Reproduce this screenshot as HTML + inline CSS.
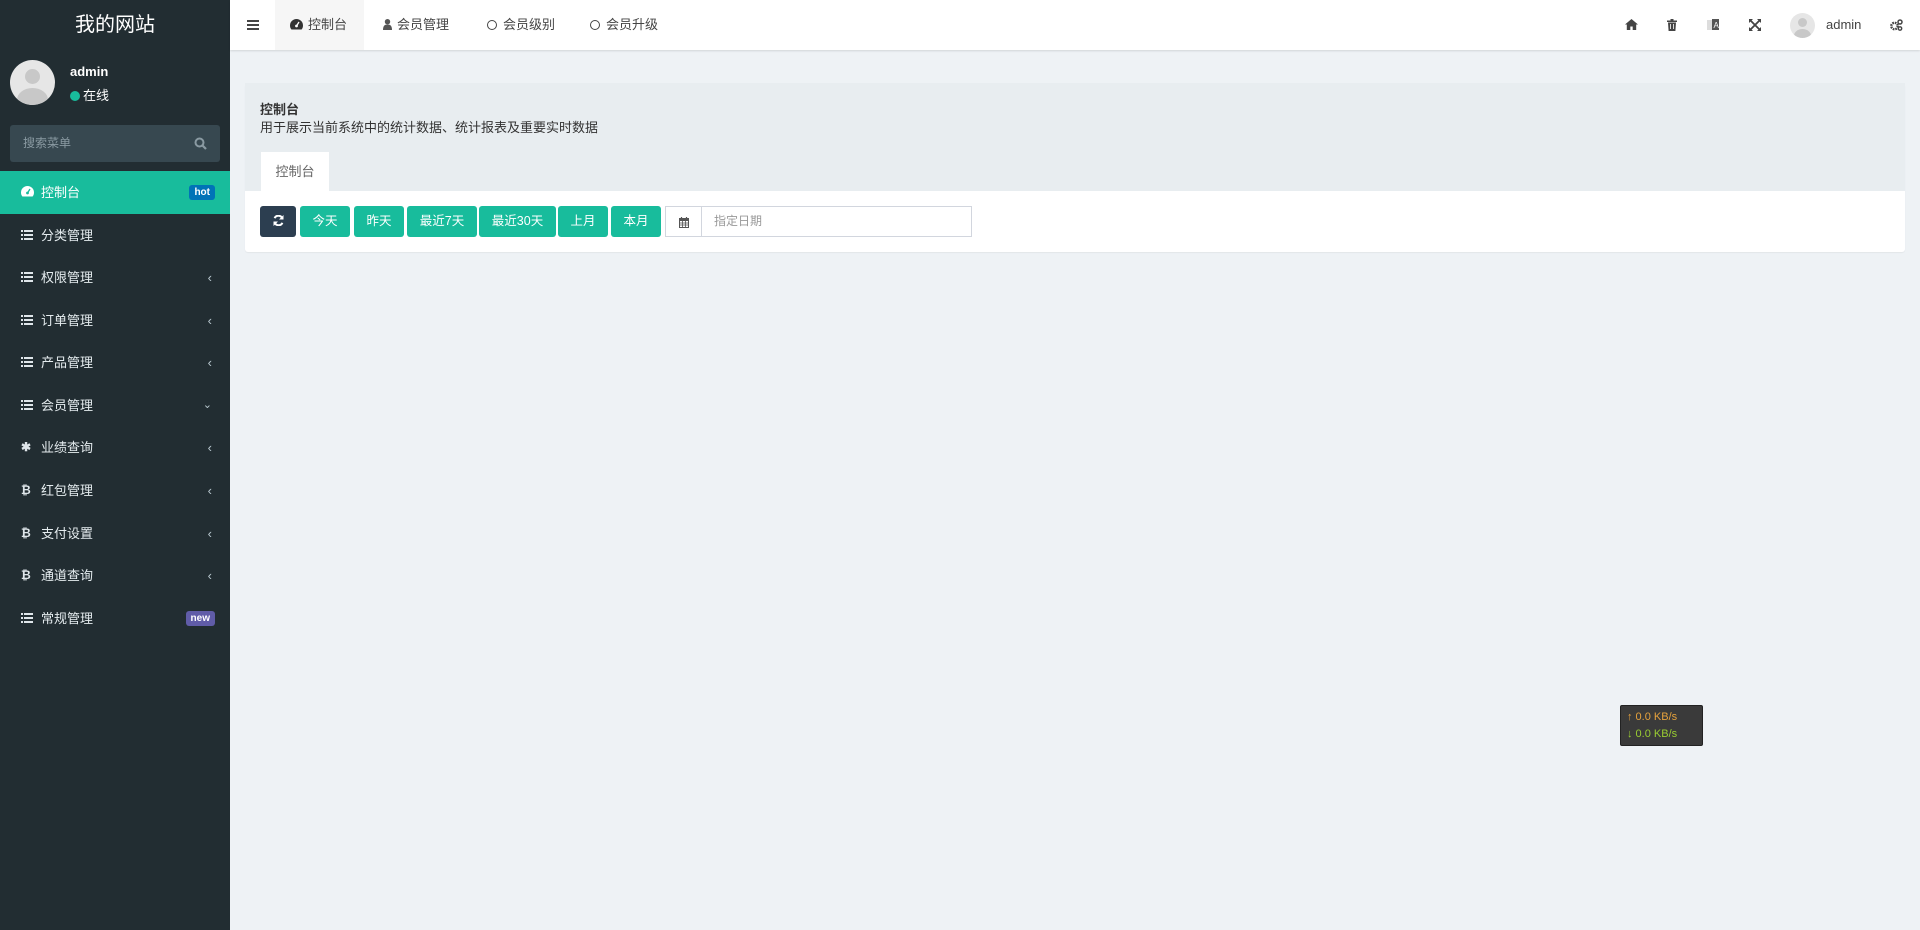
<!DOCTYPE html>
<html><head><meta charset="utf-8"><style>
*{box-sizing:border-box;margin:0;padding:0}
body{width:1920px;height:930px;overflow:hidden;background:#eef2f5;font-family:"Liberation Sans","Noto Sans CJK SC",sans-serif;font-size:13px;color:#333;position:relative}
.sb{position:absolute;left:0;top:0;width:230px;height:930px;background:#222d32}
.logo{height:50px;line-height:50px;text-align:center;color:#fff;font-size:20px}
.av{position:absolute;left:10px;top:60px;width:45px;height:45px;border-radius:50%;background:#e6e6e6;overflow:hidden}
.av:before{content:"";position:absolute;left:15px;top:9px;width:15px;height:15px;border-radius:50%;background:#c8c8c8}
.av:after{content:"";position:absolute;left:7px;top:28px;width:31px;height:24px;border-radius:50%;background:#c8c8c8}
.un{position:absolute;left:70px;top:64px;color:#fff;font-weight:bold;font-size:13px}
.st{position:absolute;left:70px;top:85px;color:#fff;font-size:13px}
.st i{display:inline-block;width:10px;height:10px;border-radius:50%;background:#18bc9c;margin-right:3px;vertical-align:-1px}
.sr{position:absolute;left:10px;top:125px;width:210px;height:37px;background:#374850;border-radius:3px;color:#8a9aa2;font-size:12px;line-height:37px;padding-left:13px}
.sr svg{position:absolute;right:13px;top:12px}
.mi{position:absolute;left:0;width:230px;height:43px;line-height:43px;color:#e5ecef;font-size:13px;padding-left:41px}
.mi.a{background:#18bc9c;color:#fff}
.mi .ic{position:absolute;left:21px;top:0;font-size:12px;color:#dfe6ea;font-weight:bold}
.mi .ic svg{vertical-align:-1px}
.mi .ar{position:absolute;right:18px;top:0;font-size:13px;color:#b8c7ce}
.bd{position:absolute;right:15px;top:14px;height:15px;line-height:15px;font-size:10px;font-weight:bold;padding:0 5px;border-radius:3px;color:#fff}
.hd{position:absolute;left:230px;top:0;right:0;height:50px;background:#fff;box-shadow:0 1px 2px rgba(0,0,0,.12)}
.ht{position:absolute;top:0;height:50px;line-height:49px;font-size:13px;color:#444}
.ht svg{vertical-align:-1px;margin-right:5px}
.o{display:inline-block;width:10px;height:10px;border:1.6px solid #444;border-radius:50%;margin-right:6px;vertical-align:-1px}
.ri{position:absolute;top:19px}
.pn{position:absolute;left:245px;top:83px;width:1660px;height:169px;background:#fff;border-radius:3px;box-shadow:0 1px 1px rgba(0,0,0,.05)}
.ph{height:108px;background:#e8edf0;position:relative}
.ph b{position:absolute;left:15px;top:16px;font-size:13px}
.ph p{position:absolute;left:15px;top:34px;font-size:13px;color:#333}
.tb{position:absolute;left:16px;top:69px;width:68px;height:39px;background:#fff;line-height:39px;text-align:center;color:#666;font-size:13px}
.bt{position:absolute;top:123px;height:31px;line-height:31px;background:#18bc9c;color:#fff;font-size:12.5px;text-align:center;border-radius:3px}
.nw{position:absolute;left:1620px;top:705px;width:83px;height:41px;background:#3a3a3a;border:1px solid #222;border-radius:2px;font-size:11px;padding:3px 6px;line-height:17px}
</style></head><body>
<div class="sb">
<div class="logo">我的网站</div>
<div class="av"></div>
<div class="un">admin</div>
<div class="st"><i></i>在线</div>
<div class="sr">搜索菜单<svg width="13" height="13" viewBox="0 0 13 13"><circle cx="5.5" cy="5.5" r="4" stroke="#8a9aa2" stroke-width="2" fill="none"/><path d="M8.5 8.5l3.5 3.5" stroke="#8a9aa2" stroke-width="2.2"/></svg></div>
<div class="mi a" style="top:171px"><span class="ic"><svg width="13" height="11" viewBox="0 0 13 11"><path d="M6.5 0A6.5 6.5 0 0 0 0 6.5c0 1.6.5 3 1.4 4h10.2c.9-1 1.4-2.4 1.4-4A6.5 6.5 0 0 0 6.5 0z" fill="#fff"/><circle cx="6.5" cy="7" r="1.4" fill="#18bc9c"/><path d="M6.5 7l2.5-4" stroke="#18bc9c" stroke-width="1.3"/></svg></span>控制台<span class="bd" style="background:#0073b7">hot</span></div>
<div class="mi" style="top:214px"><span class="ic"><svg width="12" height="10" viewBox="0 0 12 10"><path d="M0 0h2v2H0zM3 0h9v2H3zM0 4h2v2H0zM3 4h9v2H3zM0 8h2v2H0zM3 8h9v2H3z" fill="#dfe6ea"/></svg></span>分类管理</div>
<div class="mi" style="top:256px"><span class="ic"><svg width="12" height="10" viewBox="0 0 12 10"><path d="M0 0h2v2H0zM3 0h9v2H3zM0 4h2v2H0zM3 4h9v2H3zM0 8h2v2H0zM3 8h9v2H3z" fill="#dfe6ea"/></svg></span>权限管理<span class="ar">‹</span></div>
<div class="mi" style="top:299px"><span class="ic"><svg width="12" height="10" viewBox="0 0 12 10"><path d="M0 0h2v2H0zM3 0h9v2H3zM0 4h2v2H0zM3 4h9v2H3zM0 8h2v2H0zM3 8h9v2H3z" fill="#dfe6ea"/></svg></span>订单管理<span class="ar">‹</span></div>
<div class="mi" style="top:341px"><span class="ic"><svg width="12" height="10" viewBox="0 0 12 10"><path d="M0 0h2v2H0zM3 0h9v2H3zM0 4h2v2H0zM3 4h9v2H3zM0 8h2v2H0zM3 8h9v2H3z" fill="#dfe6ea"/></svg></span>产品管理<span class="ar">‹</span></div>
<div class="mi" style="top:384px"><span class="ic"><svg width="12" height="10" viewBox="0 0 12 10"><path d="M0 0h2v2H0zM3 0h9v2H3zM0 4h2v2H0zM3 4h9v2H3zM0 8h2v2H0zM3 8h9v2H3z" fill="#dfe6ea"/></svg></span>会员管理<span class="ar" style="font-size:11px">&#8964;</span></div>
<div class="mi" style="top:426px"><span class="ic">✱</span>业绩查询<span class="ar">‹</span></div>
<div class="mi" style="top:469px"><span class="ic">₿</span>红包管理<span class="ar">‹</span></div>
<div class="mi" style="top:512px"><span class="ic">₿</span>支付设置<span class="ar">‹</span></div>
<div class="mi" style="top:554px"><span class="ic">₿</span>通道查询<span class="ar">‹</span></div>
<div class="mi" style="top:597px"><span class="ic"><svg width="12" height="10" viewBox="0 0 12 10"><path d="M0 0h2v2H0zM3 0h9v2H3zM0 4h2v2H0zM3 4h9v2H3zM0 8h2v2H0zM3 8h9v2H3z" fill="#dfe6ea"/></svg></span>常规管理<span class="bd" style="background:#605ca8">new</span></div>
</div>
<div class="hd">
<div class="ht" style="left:17px"><svg width="12" height="10" viewBox="0 0 12 10"><path d="M0 0h12v2H0zM0 4h12v2H0zM0 8h12v2H0z" fill="#444"/></svg></div>
<div class="ht" style="left:45px;width:89px;background:#f6f6f6;padding-left:15px"><svg width="13" height="11" viewBox="0 0 13 11"><path d="M6.5 0A6.5 6.5 0 0 0 0 6.5c0 1.6.5 3 1.4 4h10.2c.9-1 1.4-2.4 1.4-4A6.5 6.5 0 0 0 6.5 0z" fill="#333"/><circle cx="6.5" cy="7" r="1.4" fill="#fff"/><path d="M6.5 7l2.5-4" stroke="#fff" stroke-width="1.3"/></svg>控制台</div>
<div class="ht" style="left:153px"><svg width="9" height="11" viewBox="0 0 9 11"><circle cx="4.5" cy="2.7" r="2.7" fill="#555"/><path d="M0 11c0-4 1.5-5.5 4.5-5.5S9 7 9 11z" fill="#555"/></svg>会员管理</div>
<div class="ht" style="left:257px"><i class="o"></i>会员级别</div>
<div class="ht" style="left:360px"><i class="o"></i>会员升级</div>
<svg class="ri" style="left:1395px" width="13" height="11" viewBox="0 0 13 11"><path d="M6.5 0L0 5.5h1.8V11h3.5V7.5h2.4V11h3.5V5.5H13z" fill="#444"/></svg>
<svg class="ri" style="left:1437px" width="10" height="12" viewBox="0 0 10 12"><path d="M0 1.5h10v1.5H0zM3.5 0h3v1.5h-3zM1 3.5h8l-.6 8.5H1.6z" fill="#444"/><path d="M3.5 5v5M6.5 5v5" stroke="#fff" stroke-width=".8"/></svg>
<svg class="ri" style="left:1477px" width="12" height="12" viewBox="0 0 12 12"><rect x="0" y="1" width="6" height="10" fill="#ddd"/><rect x="5" y="0" width="7" height="11" fill="#555"/><text x="6.5" y="9" font-size="8" fill="#fff" font-family="Liberation Sans">A</text></svg>
<svg class="ri" style="left:1519px" width="12" height="12" viewBox="0 0 12 12"><path d="M0 0h4L0 4zM12 0H8l4 4zM0 12h4L0 8zM12 12H8l4-4z" fill="#444"/><path d="M1.5 1.5l9 9M10.5 1.5l-9 9" stroke="#444" stroke-width="1.8"/></svg>
<div style="position:absolute;left:1560px;top:13px;width:25px;height:25px;border-radius:50%;background:#e6e6e6;overflow:hidden"><div style="position:absolute;left:8px;top:5px;width:9px;height:9px;border-radius:50%;background:#c8c8c8"></div><div style="position:absolute;left:4px;top:16px;width:17px;height:14px;border-radius:50%;background:#c8c8c8"></div></div>
<div class="ri" style="left:1596px;top:17px;font-size:13px;color:#444">admin</div>
<svg class="ri" style="left:1660px" width="13" height="12" viewBox="0 0 13 12"><circle cx="4.5" cy="7" r="3.2" stroke="#444" stroke-width="2.4" fill="none" stroke-dasharray="1.6 .9"/><circle cx="10" cy="3" r="2" stroke="#444" stroke-width="1.5" fill="none"/><circle cx="10" cy="9.5" r="1.7" stroke="#444" stroke-width="1.4" fill="none"/></svg>
</div>
<div class="pn">
<div class="ph"><b>控制台</b><p>用于展示当前系统中的统计数据、统计报表及重要实时数据</p><div class="tb">控制台</div></div>
<div class="bt" style="left:15px;width:36px;background:#2c3e50"><svg width="11" height="11" viewBox="0 0 11 11" style="vertical-align:-1px"><path d="M9.5 4A4.2 4.2 0 0 0 1.6 3.2M1.5 7a4.2 4.2 0 0 0 7.9.8" stroke="#fff" stroke-width="2" fill="none"/><path d="M10.5 0v4.5H6zM.5 11V6.5H5z" fill="#fff"/></svg></div>
<div class="bt" style="left:55px;width:50px">今天</div>
<div class="bt" style="left:109px;width:50px">昨天</div>
<div class="bt" style="left:162px;width:70px">最近7天</div>
<div class="bt" style="left:234px;width:77px">最近30天</div>
<div class="bt" style="left:313px;width:50px">上月</div>
<div class="bt" style="left:366px;width:50px">本月</div>
<div style="position:absolute;left:420px;top:123px;width:37px;height:31px;border:1px solid #d2d6de;text-align:center;padding-top:9px"><svg width="10" height="11" viewBox="0 0 10 11"><rect x="0" y="1" width="10" height="10" fill="#555"/><path d="M1 4h8v6H1z" fill="#fff"/><path d="M3.5 4v6M6.5 4v6M1 6h8M1 8h8" stroke="#555" stroke-width=".8"/><path d="M2.5 0v2M7.5 0v2" stroke="#555" stroke-width="1.2"/></svg></div>
<div style="position:absolute;left:456px;top:123px;width:271px;height:31px;border:1px solid #d2d6de;line-height:29px;padding-left:12px;font-size:12px;color:#999">指定日期</div>
</div>
<div class="nw"><div style="color:#e6a23c">↑ 0.0 KB/s</div><div style="color:#9acd32">↓ 0.0 KB/s</div></div>
</body></html>
